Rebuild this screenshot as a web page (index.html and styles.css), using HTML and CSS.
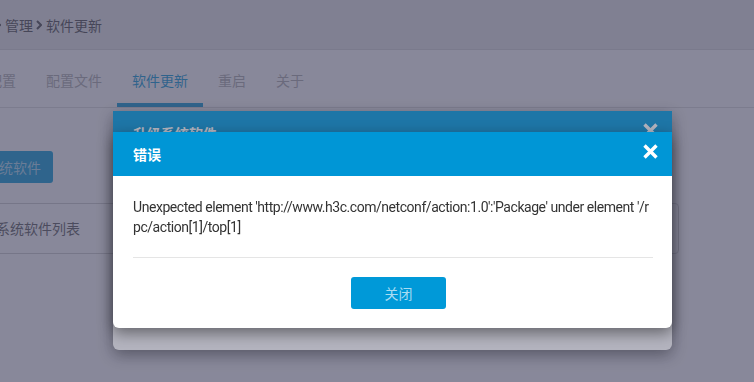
FILE: index.html
```html
<!DOCTYPE html>
<html lang="zh-CN">
<head>
    <meta charset="UTF-8">
    <meta name="viewport" content="width=device-width, initial-scale=1.0">
    <title>软件更新</title>
    <link rel="stylesheet" href="styles.css">
</head>
<body>
    <div class="page">
        <div class="crumb-bar">
            <span>设备</span>
            <svg class="crumb-sep" width="6" height="10" viewBox="0 0 6 10"><path d="M1 1 L5 5 L1 9" fill="none" stroke="currentColor" stroke-width="2"/></svg>
            <span>管理</span>
            <svg class="crumb-sep" width="6" height="10" viewBox="0 0 6 10"><path d="M1 1 L5 5 L1 9" fill="none" stroke="currentColor" stroke-width="2"/></svg>
            <span>软件更新</span>
        </div>
        <ul class="tabs">
            <li>基本配置</li>
            <li>配置文件</li>
            <li class="active">软件更新</li>
            <li>重启</li>
            <li>关于</li>
        </ul>
        <div class="content">
            <button class="btn">升级系统软件</button>
            <div class="panel">
                <div class="panel-heading">系统软件列表</div>
            </div>
        </div>
    </div>

    <div class="mask"></div>
    <div class="modal modal-upgrade">
        <div class="modal-header">
            <span class="modal-title">升级系统软件</span>
            <svg class="modal-close" width="15" height="15" viewBox="0 0 15 15"><path d="M1.5 1.5 L13.5 13.5 M13.5 1.5 L1.5 13.5" stroke="currentColor" stroke-width="3.4"/></svg>
        </div>
    </div>

    <div class="mask"></div>
    <div class="modal modal-error">
        <div class="modal-header">
            <span class="modal-title">错误</span>
            <svg class="modal-close" width="15" height="15" viewBox="0 0 15 15"><path d="M1.5 1.5 L13.5 13.5 M13.5 1.5 L1.5 13.5" stroke="currentColor" stroke-width="3.4"/></svg>
        </div>
        <div class="modal-body">
            <p class="error-text">Unexpected element 'http://www.h3c.com/netconf/action:1.0':'Package' under element '/rpc/action[1]/top[1]</p>
        </div>
        <div class="modal-footer">
            <button class="btn btn-close">关闭</button>
        </div>
    </div>
</body>
</html>
```

FILE: styles.css
```css
body {
    margin: 0;
    font-family: Roboto, "Noto Sans CJK SC", sans-serif;
    font-size: 14px;
    color: #333;
    background: #fff;
    overflow: hidden;
}
.page {
    margin-left: -55px;
}

/* breadcrumb */
.crumb-bar {
    display: flex;
    align-items: center;
    height: 49px;
    padding-left: 19px;
    background: #e8e8e8;
    border-bottom: 1px solid #d8d8d8;
    color: #444;
    font-family: "Noto Sans CJK SC", sans-serif;
}
.crumb-sep { margin: 0 4px 0 3px; color: #444; }

/* tabs */
.tabs {
    display: flex;
    list-style: none;
    margin: 0;
    padding: 0;
    height: 57px;
    border-bottom: 1px solid #ddd;
    font-family: "Noto Sans CJK SC", sans-serif;
}
.tabs li {
    padding: 7px 15px 0;
    height: 46px;
    line-height: 46px;
    color: #aaa;
    border-bottom: 4px solid transparent;
}
.tabs li.active {
    color: #0096d6;
    border-bottom-color: #0096d6;
}

/* content */
.content {
    padding: 43px 75px 0 0;
}
.btn {
    display: block;
    height: 32px;
    padding: 0 12px;
    border: none;
    border-radius: 3px;
    background: #0099d8;
    color: #a9dcf2;
    font-family: "Noto Sans CJK SC", sans-serif;
    font-size: 14px;
}
.panel {
    margin: 20px 0 0 35px;
    border: 1px solid #ccc;
    border-radius: 4px;
}
.panel-heading {
    height: 49px;
    line-height: 49px;
    padding-left: 15px;
    color: #555;
    font-family: "Noto Sans CJK SC", sans-serif;
}

/* modal */
.mask {
    position: fixed;
    top: 0;
    left: 0;
    right: 0;
    bottom: 0;
    background: rgba(73, 74, 100, 0.413);
}
.modal {
    position: fixed;
    left: 113px;
    width: 559px;
    background: #fff;
    border-radius: 0 0 6px 6px;
    box-shadow: 0 5px 15px rgba(0, 0, 0, 0.45);
}
.modal-upgrade { top: 111px; height: 239px; }
.modal-error { top: 132px; }
.modal-header {
    display: flex;
    align-items: center;
    justify-content: space-between;
    height: 44px;
    padding: 0 14px 0 20px;
    background: #0096d6;
    color: #fff;
}
.modal-title {
    font-family: "Noto Sans CJK SC", sans-serif;
    font-weight: bold;
}
.modal-close { margin-top: -5px; }
.modal-body {
    margin: 0 19px 0 20px;
    padding: 21px 0 20px;
    border-bottom: 1px solid #e5e5e5;
}
.error-text {
    margin: 0;
    line-height: 20px;
    letter-spacing: -0.45px;
    word-break: break-all;
}
.modal-footer {
    padding: 19px 0;
}
.btn-close {
    width: 95px;
    margin: 0 auto;
    position: relative;
    left: 6px;
}
```
